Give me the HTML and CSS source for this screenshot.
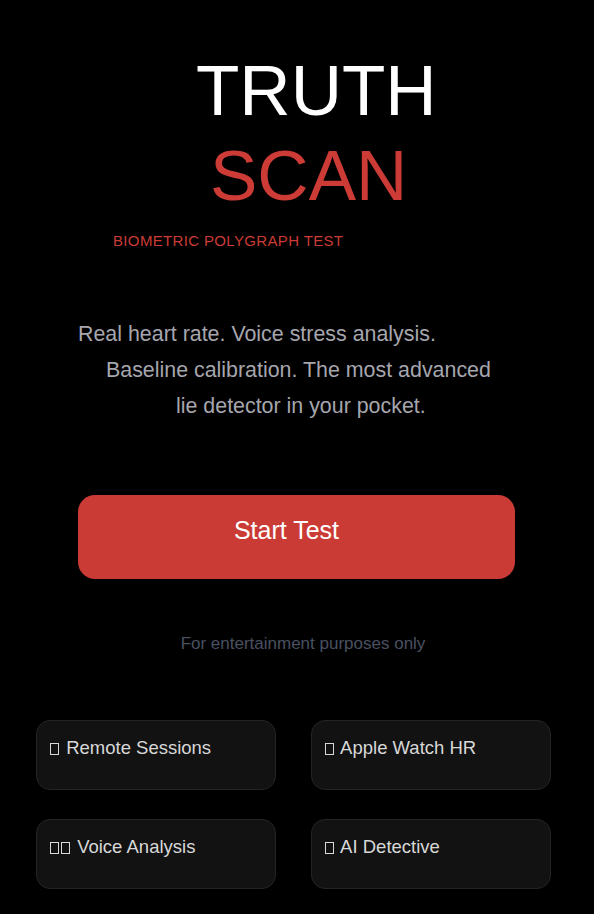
FILE: index.html
```html
<!DOCTYPE html>
<html>
<head>
<meta charset="utf-8">
<link rel="stylesheet" href="styles.css">
</head>
<body>
<div class="screen">
  <header class="hero">
    <h1 class="title">
      <span class="line-truth">TRUTH</span>
      <span class="line-scan">SCAN</span>
    </h1>
    <div class="subtitle">BIOMETRIC POLYGRAPH TEST</div>
  </header>
  <p class="intro">
    <span class="l1">Real heart rate. Voice stress analysis.</span>
    <span class="l2">Baseline calibration. The most advanced</span>
    <span class="l3">lie detector in your pocket.</span>
  </p>
  <div class="cta-wrap">
    <button class="cta">Start Test</button>
  </div>
  <p class="disclaimer">For entertainment purposes only</p>
  <div class="features">
    <div class="card"><span class="tofu"></span> Remote Sessions</div>
    <div class="card"><span class="tofu"></span> Apple Watch HR</div>
    <div class="card"><span class="tofu"></span><span class="tofu"></span> Voice Analysis</div>
    <div class="card"><span class="tofu"></span> AI Detective</div>
  </div>
</div>
</body>
</html>
```
FILE: styles.css
```css
* { box-sizing: border-box; }
html, body { margin: 0; padding: 0; background: #000; }
body { font-family: "Liberation Sans", Arial, Helvetica, sans-serif; color: #fff; }
.screen { width: 594px; height: 914px; overflow: hidden; background: #000; }

.hero { padding-top: 48px; }
.title { margin: 0; font-weight: 400; font-size: 71px; line-height: 85px; display: flex; flex-direction: column; }
.line-truth { color: #fff; padding-left: 196px; }
.line-scan { color: #cc3b35; padding-left: 210px; }
.subtitle { color: #cc3b35; font-size: 15px; letter-spacing: 0.35px; padding-left: 113px; margin-top: 14px; line-height: 18px; }

.intro { margin: 66px 0 0; color: #a6a6ae; font-size: 21.4px; line-height: 36px; display: flex; flex-direction: column; }
.intro .l1 { padding-left: 78px; }
.intro .l2 { padding-left: 106px; }
.intro .l3 { padding-left: 176px; }

.cta-wrap { padding: 0 79px 0 78px; margin-top: 71px; }
.cta { display: block; width: 100%; height: 84px; border: 0; border-radius: 17px; background: #cb3b35; color: #fff; font-family: inherit; font-size: 25px; padding: 0 20px 14px 0; }

.disclaimer { margin: 53px 0 0; text-align: center; color: #4a5060; font-size: 17px; line-height: 24px; padding-left: 12px; }

.features { display: grid; grid-template-columns: 240px 240px; column-gap: 35px; row-gap: 29px; padding-left: 36px; margin-top: 64px; }
.card { height: 70px; background: #121212; border: 1px solid #242424; border-radius: 14px; color: #d8d8d8; font-size: 18.5px; line-height: 20px; padding: 17px 0 0 13px; }
.tofu { display: inline-block; width: 9px; height: 12px; border: 1.5px solid #d8d8d8; margin-right: 2px; vertical-align: -1px; }
```
